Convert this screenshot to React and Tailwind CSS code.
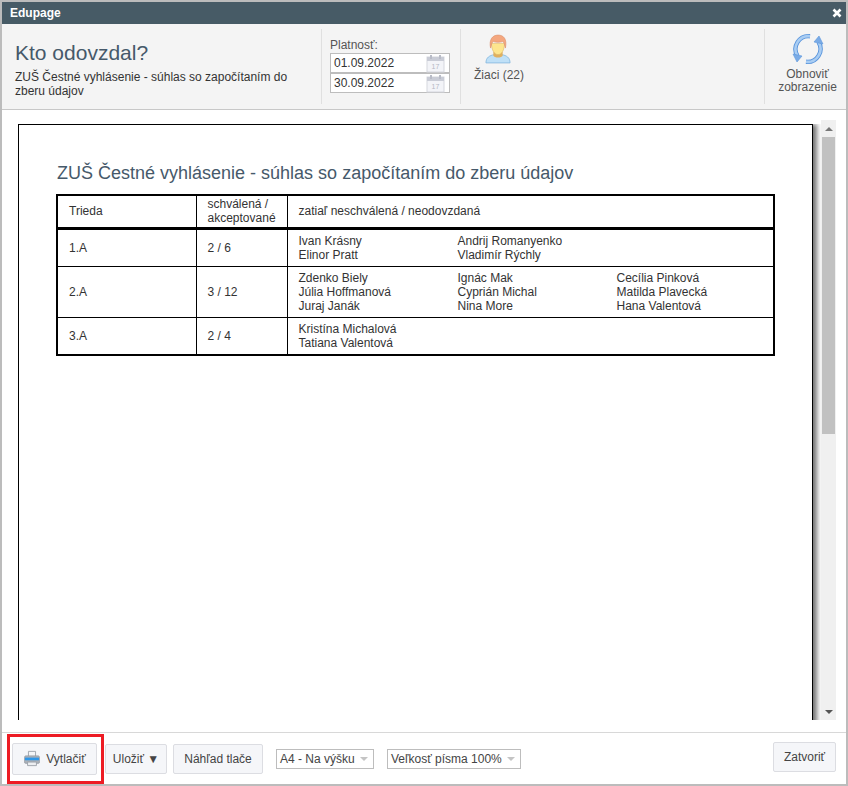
const rows = [
  { trieda: '1.A', pocet: '2 / 6', h: 'h-[38px]', mena: [['Ivan Krásny', 'Elinor Pratt'], ['Andrij Romanyenko', 'Vladimír Rýchly']] },
  {
    trieda: '2.A',
    pocet: '3 / 12',
    h: 'h-[51px]',
    mena: [
      ['Zdenko Biely', 'Júlia Hoffmanová', 'Juraj Janák'],
      ['Ignác Mak', 'Cyprián Michal', 'Nina More'],
      ['Cecília Pinková', 'Matilda Plavecká', 'Hana Valentová'],
    ],
  },
  { trieda: '3.A', pocet: '2 / 4', h: 'h-[38px]', mena: [['Kristína Michalová', 'Tatiana Valentová']] },
]

function CalendarIcon() {
  return (
    <svg width="19" height="19" viewBox="0 0 19 19" className="shrink-0">
      <rect x="1" y="3" width="17" height="15" fill="#f3f4f8" stroke="#d5d7de" />
      <rect x="1" y="3" width="17" height="4" fill="#c9ccd6" />
      <rect x="4" y="1" width="2" height="4" fill="#b9bcc7" />
      <rect x="13" y="1" width="2" height="4" fill="#b9bcc7" />
      <text x="9.5" y="15" textAnchor="middle" fontSize="7" fill="#b4b8c4" fontFamily="Liberation Sans">17</text>
    </svg>
  )
}

function DateInput({ value }) {
  return (
    <div className="w-[120px] h-[20px] border border-[#bdbdbd] bg-white flex items-center pl-[3px] pr-[4px] justify-between">
      <span className="text-[12px] text-[#333]">{value}</span>
      <CalendarIcon />
    </div>
  )
}

function PersonIcon() {
  return (
    <svg width="26" height="30" viewBox="0 0 28 32">
      <path d="M1 31c0-6 4-8 9-9l4 1 4-1c5 1 9 3 9 9z" fill="#bfe0f7" stroke="#7fb4dc" strokeWidth="0.8" />
      <path d="M9 19h10v4c-1 3-9 3-10 0z" fill="#e0b060" />
      <path d="M7 10c0 7 3 12 7 12s7-5 7-12z" fill="#fde58e" stroke="#d9b565" strokeWidth="0.6" />
      <path d="M6 15C4 6 8 1 14 1c6 0 10 4 8 14-1-3-1-6-3-7-3 1-7 1-10 0-2 1-2 4-3 7z" fill="#f4a77f" stroke="#d98a63" strokeWidth="0.6" />
    </svg>
  )
}

function RefreshIcon() {
  return (
    <svg width="32" height="32" viewBox="0 0 32 32">
      <path d="M18 3.200A13 13 0 0 0 5.500 23" fill="none" stroke="#5a95dc" strokeWidth="4.400" />
      <path d="M18 3.200A13 13 0 0 0 5.500 23" fill="none" stroke="#a9cdf3" strokeWidth="2.600" />
      <path d="M1 21l9 2-5 6z" fill="#7aabe6" stroke="#5a95dc" strokeWidth="0.6" />
      <path d="M14 28.800A13 13 0 0 0 26.500 9" fill="none" stroke="#5a95dc" strokeWidth="4.400" />
      <path d="M14 28.800A13 13 0 0 0 26.500 9" fill="none" stroke="#a9cdf3" strokeWidth="2.600" />
      <path d="M31 11l-9-2 5-6z" fill="#7aabe6" stroke="#5a95dc" strokeWidth="0.6" />
    </svg>
  )
}

function PrinterIcon() {
  return (
    <svg width="16" height="17" viewBox="0 0 18 18">
      <path d="M5 1h8v6H5z" fill="#f4f5f7" stroke="#9aa0a8" />
      <path d="M2 6h14c1 0 1.500 1 1.500 2v5c0 1-.5 1.500-1.500 1.500H2C1 14.500.5 14 .5 13V8C.5 7 1 6 2 6z" fill="#aab0b8" stroke="#8a9098" strokeWidth="0.6" />
      <rect x="1" y="8" width="16" height="3" fill="#2f97e8" />
      <path d="M4 13h10v4H4z" fill="#eceef1" stroke="#9aa0a8" />
    </svg>
  )
}

function Select({ label, className }) {
  return (
    <div className={`h-[20px] border border-[#bdbdbd] bg-white flex items-center justify-between pl-[3px] pr-[5px] text-[12px] text-[#444] ${className}`}>
      <span>{label}</span>
      <span className="w-0 h-0 border-l-[4px] border-r-[4px] border-t-[4px] border-l-transparent border-r-transparent border-t-[#c4c4c4]" />
    </div>
  )
}

export default function App() {
  return (
    <div className="relative w-[848px] h-[786px] border-2 border-[#bcbcbc] bg-white flex flex-col overflow-hidden font-['Liberation_Sans',Arial,sans-serif]">

      {/* Title bar */}
      <div className="h-[22px] shrink-0 bg-[#475b66] flex items-center justify-between pl-[8px] pr-[4px] text-white">
        <span className="text-[12px] font-bold">Edupage</span>
        <svg width="10" height="10" viewBox="0 0 10 10">
          <path d="M1.500 1.500l7 7M8.500 1.500l-7 7" stroke="#fff" strokeWidth="2.600" />
        </svg>
      </div>

      {/* Toolbar */}
      <div className="h-[86px] shrink-0 bg-[#f4f4f4] border-b border-[#c8c8c8] flex pt-[5px] pb-[5px]">
        <div className="w-[320px] shrink-0 border-r border-[#e0e0e0] pl-[13px] pr-[20px] pt-[10px]">
          <h1 className="text-[21px] leading-[28px] text-[#46596a]">Kto odovzdal?</h1>
          <p className="mt-[3px] text-[12px] leading-[14px] text-[#333]">ZUŠ Čestné vyhlásenie - súhlas so započítaním do zberu údajov</p>
        </div>
        <div className="w-[139px] shrink-0 border-r border-[#e0e0e0] pl-[8px] pt-[9px]">
          <div className="text-[12px] leading-[14px] text-[#555] mb-[1px]">Platnosť:</div>
          <DateInput value="01.09.2022" />
          <DateInput value="30.09.2022" />
        </div>
        <div className="w-[304px] shrink-0 border-r border-[#e0e0e0] pl-[13px] pt-[5px] flex flex-col items-start">
          <div className="ml-[11px]"><PersonIcon /></div>
          <span className="mt-[4px] text-[12px] leading-[14px] text-[#555]">Žiaci (22)</span>
        </div>
        <div className="flex-1 flex flex-col items-center pt-[4px] pl-[4px]">
          <RefreshIcon />
          <span className="mt-[3px] text-[12px] leading-[13px] text-[#555] text-center">Obnoviť<br />zobrazenie</span>
        </div>
      </div>

      {/* Content */}
      <div className="flex-1 min-h-0 flex pt-[14px] pl-[16px] pr-[10px] pb-[12px] border-b border-[#d8d8d8]">
        <div className="flex-1 min-w-0 overflow-hidden">
          <div className="w-[795px] h-[700px] border border-black border-b-0 bg-white shadow-[4px_0_5px_rgba(0,0,0,0.55)] pl-[38px] pt-[37px]">
            <h2 className="text-[18px] leading-[22px] text-[#46596a]">ZUŠ Čestné vyhlásenie - súhlas so započítaním do zberu údajov</h2>
            <table className="mt-[10px] -ml-[1px] w-[719px] table-fixed border-collapse border-2 border-black text-[12px] text-[#333]">
              <thead>
                <tr className="h-[33px] border-b-[3px] border-black">
                  <th className="w-[139px] border-r border-black pl-[11px] text-left font-normal">Trieda</th>
                  <th className="w-[91px] border-r border-black pl-[11px] text-left font-normal leading-[14px]">schválená / akceptované</th>
                  <th className="pl-[11px] text-left font-normal">zatiaľ neschválená / neodovzdaná</th>
                </tr>
              </thead>
              <tbody>
                {rows.map((r) => (
                  <tr key={r.trieda} className={`${r.h} border-b border-black`}>
                    <td className="border-r border-black pl-[11px]">{r.trieda}</td>
                    <td className="border-r border-black pl-[11px]">{r.pocet}</td>
                    <td className="pl-[11px]">
                      <div className="grid grid-cols-[159px_159px_1fr] leading-[14px]">
                        {r.mena.map((stlpec, i) => (
                          <div key={i}>
                            {stlpec.map((m) => <div key={m}>{m}</div>)}
                          </div>
                        ))}
                      </div>
                    </td>
                  </tr>
                ))}
              </tbody>
            </table>
          </div>
        </div>

        {/* Scrollbar */}
        <div className="w-[15px] -mt-[4px] shrink-0 bg-[#f0f0f0] flex flex-col items-center">
          <div className="h-[17px] flex items-center justify-center">
            <span className="w-0 h-0 border-l-[4px] border-r-[4px] border-b-[4px] border-l-transparent border-r-transparent border-b-[#777]" />
          </div>
          <div className="w-[13px] h-[297px] bg-[#c1c1c1]" />
          <div className="flex-1" />
          <div className="h-[17px] flex items-center justify-center">
            <span className="w-0 h-0 border-l-[4px] border-r-[4px] border-t-[4px] border-l-transparent border-r-transparent border-t-[#555]" />
          </div>
        </div>
      </div>

      {/* Footer */}
      <div className="h-[51px] shrink-0 flex items-center pl-[10px] pr-[10px] text-[12px] text-[#444]">
        <button className="w-[85px] h-[32px] bg-[#f5f6f9] border border-[#dcdde2] rounded-[2px] flex items-center justify-center gap-[6px] pl-[1px]">
          <PrinterIcon />
          <span>Vytlačiť</span>
        </button>
        <button className="ml-[8px] w-[62px] h-[30px] bg-[#f5f6f9] border border-[#dcdde2] rounded-[2px]">Uložiť ▼</button>
        <button className="ml-[6px] w-[90px] h-[30px] bg-[#f5f6f9] border border-[#dcdde2] rounded-[2px]">Náhľad tlače</button>
        <Select label="A4 - Na výšku" className="ml-[13px] w-[98px]" />
        <Select label="Veľkosť písma 100%" className="ml-[13px] w-[134px]" />
        <button className="ml-auto w-[63px] h-[30px] bg-[#f5f6f9] border border-[#dcdde2] rounded-[2px] mb-[3px]">Zatvoriť</button>
      </div>

      {/* Red annotation */}
      <div className="absolute left-[5px] top-[732px] w-[97px] h-[50px] border-[3px] border-[#ed1c24] pointer-events-none" />
    </div>
  )
}
